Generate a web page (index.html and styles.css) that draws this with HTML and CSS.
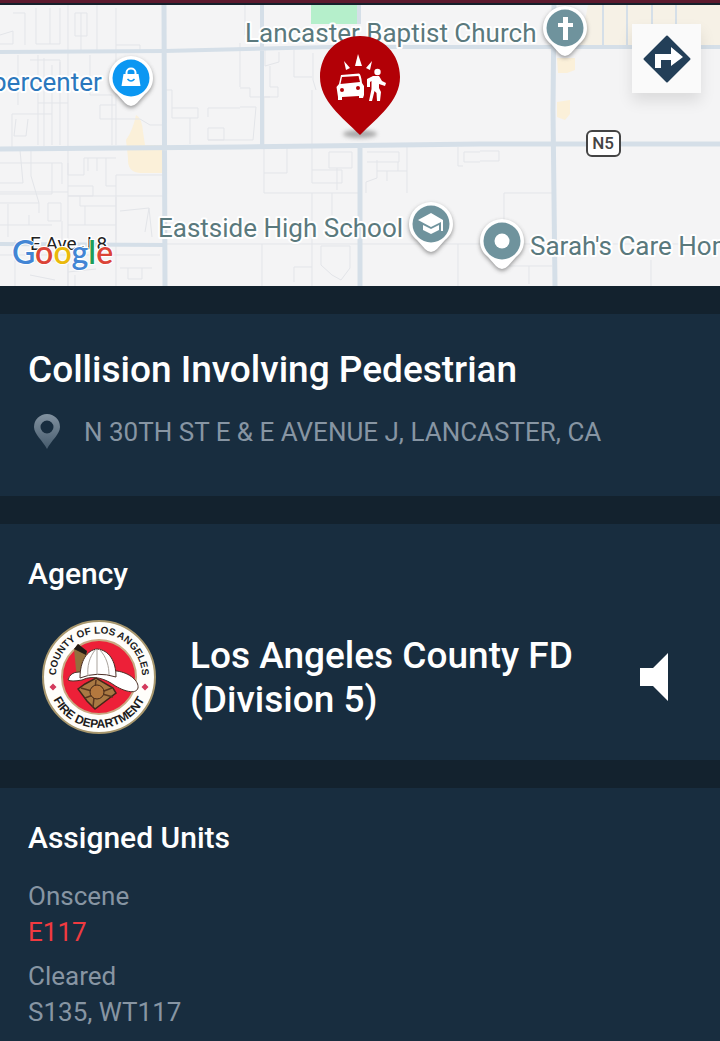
FILE: index.html
```html
<!DOCTYPE html>
<html lang="en">
<head>
	<meta charset="UTF-8">
	<meta name="viewport" content="width=device-width, initial-scale=1">
	<title>Collision Involving Pedestrian</title>
	<link rel="stylesheet" href="styles.css">
</head>
<body>
<div class="topbar"></div>
<div class="map">
<svg class="map-canvas" viewBox="0 5 720 281" preserveAspectRatio="xMinYMin slice">
	<defs>
		<path id="pin" d="M0-22A22 22 0 0 0-22 0C-22 7-19 12-14 16L-6 25Q0 31 6 25L14 16C19 12 22 7 22 0A22 22 0 0 0 0-22Z"/>
		<filter id="soft" x="-50%" y="-50%" width="200%" height="200%"><feGaussianBlur stdDeviation="2"/></filter>
	</defs>
	<!-- parks and built-up areas -->
	<path class="park" d="M311 5H358V24H311Z"/>
	<path class="area" d="M136 115Q142 118 143 132L145 145H164V173H140Q127 172 128 158L126 140Q133 130 136 115Z"/>
	<path class="area" d="M557 58H575V70L567 73H558ZM557 102L570 100V114L565 120L557 117Z"/>
	<path class="area pale" d="M588 5H720V45H580Z"/>
	<!-- small streets -->
	<g class="street">
		<path d="M13 13H25V45M0 35L13 31V44H0M36 8V44H60V8M50 8V44M68 5V286M75 13H87V36H75ZM81 13V52M97 5V52M116 8V145M116 45H140V50M18 55V105M30 60H60V80M38 55V145M44 58V146M52 65V145M60 62V145M90 55V95H112V145M68 103H38M12 114V150M12 114H52M16 119L14 136H26L28 119M100 105V119H140L150 125H164M100 105H116M164 90H172V118H198V108H172M190 118V144M240 108H208V117M208 128H224V140H208V128M240 140H208M240 43V87"/>
		<path d="M0 163H62V184M20 150L23 183H0M31 150V176L39 203M52 163V194H0M0 192H68M39 203H0M39 203V213M48 203V221H61V203ZM8 204V237M29 215V225M0 225H52M62 221V240M68 163V175H84V158H116M88 158V171M97 158V171M106 158V186H116M68 186H93V196H68M68 196H163M80 196V206H85V225M85 206H116M116 175V286M116 175H164M120 211L149 208L145 232M116 197V240M149 208L152 237M68 225H116M120 268H152M128 268V279H142V268M68 272L96 269M75 275V286M15 240V286M0 255H160M68 240V286M15 261H60M30 275L55 280"/>
		<path d="M164 244H720M245 5V35M265 48V66L279 62V52M270 66V87H278V97H264V145M240 88H250V97H270M240 107H256L253 140H240M294 50V77H312M313 53V80L316 90M312 90V145M264 145V193H358M287 145V173H264M329 152H352V168H329ZM312 145V183M312 170H342V183H312M337 168V190M312 193V286M332 193V215M321 246H350V268L341 280L332 275L321 265ZM294 267H312M294 267V282M367 152H399V162H367M377 160V178L366 182V193M377 171H407V193M387 171V181M398 162V171M407 145V171M458 147V166H463M464 152H480M464 152V162H480M480 151H499V161H480M504 193V220M504 193H552M502 266H552M529 266V284M651 260V286M458 244V286M262 244V286"/>
	</g>
	<!-- main roads -->
	<g class="road">
		<path class="thin" d="M603 5V45M627 5V45M652 5V45M676 5V45"/>
		<path d="M0 52L165 51L330 47H720M262 5V145M0 244L165 245M359 5V24"/>
		<path class="wide" d="M0 149L240 147L480 144H720M164 5L165 286M360 144V286M554 5L553 110L555 286"/>
	</g>
	<!-- place names -->
	<g class="place">
		<text class="shop" x="-8" y="91">percenter</text>
		<text x="245" y="42">Lancaster Baptist Church</text>
		<text x="158" y="237">Eastside High School</text>
		<text x="530" y="255">Sarah's Care Home</text>
	</g>
	<rect class="shield" x="587" y="131" width="33" height="25" rx="5"/>
	<text class="shield-text" x="603" y="149">N5</text>

	<g transform="translate(131 78)">
		<use href="#pin" class="pin-shadow" y="2"/><use href="#pin" class="pin"/>
		<circle r="18.500" fill="#0b97f2"/>
		<path d="M-7.500-4H7.500L9.500 8H-9.500Z" fill="#fff"/>
		<path d="M-4.500-4V-5.500A4.500 4 0 0 1 4.500-5.500V-4" fill="none" stroke="#fff" stroke-width="2"/>
		<path d="M-3.500 1Q0 5 3.500 1" fill="none" stroke="#0b97f2" stroke-width="1.500"/>
	</g>
	<g transform="translate(565 28)">
		<use href="#pin" class="pin-shadow" y="2"/><use href="#pin" class="pin"/>
		<circle r="18.500" fill="#6f939d"/>
		<path d="M-2-11H3V-5H8V-1H3V12H-2V-1H-7V-5H-2Z" fill="#fff"/>
	</g>
	<g transform="translate(431 224)">
		<use href="#pin" class="pin-shadow" y="2"/><use href="#pin" class="pin"/>
		<circle r="18.500" fill="#6f939d"/>
		<path d="M0-11L-13-4L0 3L10-2V7H12V-4ZM-8 1V6L0 10L8 6V1L0 5Z" fill="#fff"/>
	</g>
	<g transform="translate(502 241)">
		<use href="#pin" class="pin-shadow" y="2"/><use href="#pin" class="pin"/>
		<circle r="18.500" fill="#6f939d"/>
		<circle r="7.500" fill="#fff"/>
	</g>

	<!-- incident marker -->
	<ellipse cx="360" cy="134" rx="17" ry="4" fill="#777" opacity=".6" filter="url(#soft)"/>
	<path d="M360 36C337 36 320 54 320 77C320 101 342 117 360 135C378 117 400 101 400 77C400 54 383 36 360 36Z" fill="#b20006"/>
	<g fill="#fff">
		<path d="M358 54L362 66H355ZM344 61L350 68L346 70ZM372 61L370 70L366 68Z"/>
		<path fill-rule="evenodd" d="M341 75L359 73.500Q361 74 362 83L364 86V95L363 98H359V96L342 97V100H338V97L336.500 87L339 84ZM342 77L340.500 84L360 82L358.500 76ZM342 88A2 2 0 1 0 342 92A2 2 0 1 0 342 88M358 86A2 2 0 1 0 358 90A2 2 0 1 0 358 86"/>
		<circle cx="377.500" cy="72" r="3.200"/>
		<path d="M373 76H379L382 81L386 83L385 86L379 84V88L381 92L380 101H377L376.500 93L374.500 91L372 101H369L371.500 89V81L370 82V87H367V79Z"/>
	</g>

	<text class="road-name" x="30" y="250">E Ave J 8</text>
	<text class="google" x="12" y="264"><tspan fill="#4285d4">G</tspan><tspan fill="#db4437">o</tspan><tspan fill="#eab90c">o</tspan><tspan fill="#4285d4">g</tspan><tspan fill="#1d9d58">l</tspan><tspan fill="#db4437">e</tspan></text>
</svg>
<button class="directions" aria-label="Directions">
	<svg viewBox="0 0 48 48" width="48" height="48"><path d="M24 1.500L46.500 24L24 46.500L1.500 24Z" fill="#233f58" stroke="#233f58" stroke-width="2" stroke-linejoin="round"/><path d="M12 33V19H28V12L40 22L28 31V25H18V33Z" fill="#fff"/></svg>
</button>
</div>

<section class="card incident">
	<h1>Collision Involving Pedestrian</h1>
	<p class="address">
		<svg class="marker" viewBox="0 0 26 36" width="26" height="36">
			<defs><linearGradient id="fade" x2="0" y2="1"><stop stop-color="#8292a0"/><stop offset="1" stop-color="#465b6d"/></linearGradient></defs>
			<path fill="url(#fade)" fill-rule="evenodd" d="M13 0A13 13 0 0 0 0 13C0 20 9 27 13 35C17 27 26 20 26 13A13 13 0 0 0 13 0M13 6.500A6.500 6.500 0 1 1 13 19.500A6.500 6.500 0 1 1 13 6.500"/>
		</svg>
		<span>N 30TH ST E &amp; E AVENUE J, LANCASTER, CA</span>
	</p>
</section>

<section class="card agency">
	<h2>Agency</h2>
	<div class="agency-row">
		<svg class="seal" viewBox="-57 -57 114 114" width="114" height="114">
			<defs>
				<path id="arcTop" d="M-42.500 6A43 43 0 1 1 42.500 6"/>
				<path id="arcBottom" d="M-50 10A51 51 0 0 0 50 10"/>
			</defs>
			<circle r="56" fill="#fffefa" stroke="#a8976d" stroke-width="2"/>
			<circle r="37" fill="#ed2038" stroke="#c9a983" stroke-width="2"/>
			<text class="seal-text top"><textPath href="#arcTop" startOffset="50%">COUNTY OF LOS ANGELES</textPath></text>
			<text class="seal-text"><textPath href="#arcBottom" startOffset="50%">FIRE DEPARTMENT</textPath></text>
			<path d="M-46 6.500L-42.500 10L-46 13.500L-49.500 10ZM46 6.500L49.500 10L46 13.500L42.500 10Z" fill="#d33b5c"/>
			<!-- helmet -->
			<path d="M-25-28L-21-33L-12-26L-14 0L-22 3Z" fill="#93703d"/>
			<path d="M-25-28L-21-33L-12-26L-13-22Z" fill="#211a14"/>
			<path d="M-31 3Q-29-5-20-5L18-6C31-4 40 4 39 11C37 18 24 14 15 8C8 3-5-3-17 3Q-28 5-31 3Z" fill="#fff" stroke="#4b3028" stroke-width="1"/>
			<path d="M-19 1C-19-16-12-27-2-28C10-27 17-16 17 0Q-2-6-19 1Z" fill="#fff" stroke="#4b3028" stroke-width="1"/>
			<path d="M-3-28C-10-20-12-10-11-1M-2-28V-3M0-28C8-20 10-10 10-2" fill="none" stroke="#a9a39d" stroke-width="1"/>
			<path d="M-21 12L-14 7L-3 1L14 11L17 16L-4 32L-12 24Z" fill="#a97943" stroke="#432819" stroke-width="1.500"/>
			<path d="M-18 11L14 20M-3 3L-6 30M13 11L-14 21" stroke="#5a371f" stroke-width="1.500"/>
			<circle cx="-2" cy="15" r="7" fill="#b4783e" stroke="#432819" stroke-width="1"/>
		</svg>
		<p class="agency-name">Los Angeles County FD (Division 5)</p>
		<button class="listen" aria-label="Listen">
			<svg viewBox="0 0 28 48" width="28" height="48"><path d="M0 15H13L28 0V48L13 33H0Z" fill="#fff"/></svg>
		</button>
	</div>
</section>

<section class="card units">
	<h2>Assigned Units</h2>
	<dl>
		<dt>Onscene</dt>
		<dd class="onscene">E117</dd>
		<dt>Cleared</dt>
		<dd>S135, WT117</dd>
	</dl>
</section>
</body>
</html>
```
FILE: styles.css
```css
*{
	padding: 0;
	margin: 0;
	box-sizing: border-box;
}
body{
	background-color: #182d3f;
	color: #fff;
	font-family: Roboto, "Liberation Sans", sans-serif;
}
button{
	border: 0;
	background: none;
}
svg{
	display: block;
}
.topbar{
	height: 5px;
	background-color: #5d1a2e;
	border-bottom: 2px solid #14202b;
}
.map{
	position: relative;
	height: 281px;
	background-color: #f4f4f5;
	overflow: hidden;
}
.map-canvas{
	width: 100%;
	height: 100%;
}
.park{
	fill: #b5efcb;
}
.area{
	fill: #fbf0d9;
}
.pale{
	fill: #f6f1e6;
}
.street{
	fill: none;
	stroke: #e3e5e9;
	stroke-width: 1;
}
.road{
	fill: none;
	stroke: #d5dfe8;
	stroke-width: 4;
}
.road .thin{
	stroke-width: 2;
}
.road .wide{
	stroke-width: 5;
}
.place{
	font-size: 26px;
	fill: #5a797d;
	stroke: #fff;
	stroke-width: 4px;
	stroke-linejoin: round;
	paint-order: stroke;
}
.place .shop{
	fill: #2b78bd;
}
.shield{
	fill: #fff;
	stroke: #444;
	stroke-width: 2;
}
.shield-text{
	font-size: 17px;
	font-weight: 500;
	fill: #444;
	text-anchor: middle;
}
.pin{
	fill: #fff;
}
.pin-shadow{
	fill: #555;
	opacity: .6;
	filter: url(#soft);
}
.road-name{
	font-size: 19px;
	fill: #222;
	stroke: #fff;
	stroke-width: 3px;
	paint-order: stroke;
}
.google{
	font-family: Lato, sans-serif;
	font-size: 32px;
	font-weight: 600;
	stroke: #fff;
	stroke-width: 2px;
	paint-order: stroke;
}
.directions{
	position: absolute;
	top: 19px;
	right: 19px;
	width: 69px;
	height: 69px;
	display: flex;
	align-items: center;
	justify-content: center;
	background-color: #fafafa;
	box-shadow: 0 8px 14px rgba(0,0,0,.1);
}
.card{
	border-top: 28px solid #13222e;
	padding: 32px 28px 26px;
}
h1,
.agency-name{
	font-size: 37px;
	font-weight: 500;
	line-height: 44px;
}
h2{
	font-size: 30px;
	font-weight: 500;
	line-height: 36px;
}
.incident{
	padding-top: 34px;
	padding-bottom: 46px;
}
.address{
	display: flex;
	align-items: center;
	gap: 24px;
	margin-top: 22px;
	padding-left: 6px;
	color: #8795a3;
	font-size: 26px;
	line-height: 36px;
}
.marker{
	flex: none;
}
.agency-row{
	display: flex;
	align-items: center;
	gap: 34px;
	margin-top: 28px;
	padding: 0 24px 0 14px;
}
.seal{
	flex: none;
}
.seal-text{
	font-family: "Liberation Sans", sans-serif;
	font-size: 12px;
	font-weight: bold;
	fill: #1c1c1c;
	text-anchor: middle;
}
.seal-text.top{
	font-size: 10px;
}
.agency-name{
	flex: 1;
	padding-top: 2px;
}
dl{
	margin-top: 22px;
	color: #8795a3;
	font-size: 26px;
	line-height: 36px;
}
dd{
	margin-bottom: 8px;
}
.onscene{
	color: #f03a40;
}
```
